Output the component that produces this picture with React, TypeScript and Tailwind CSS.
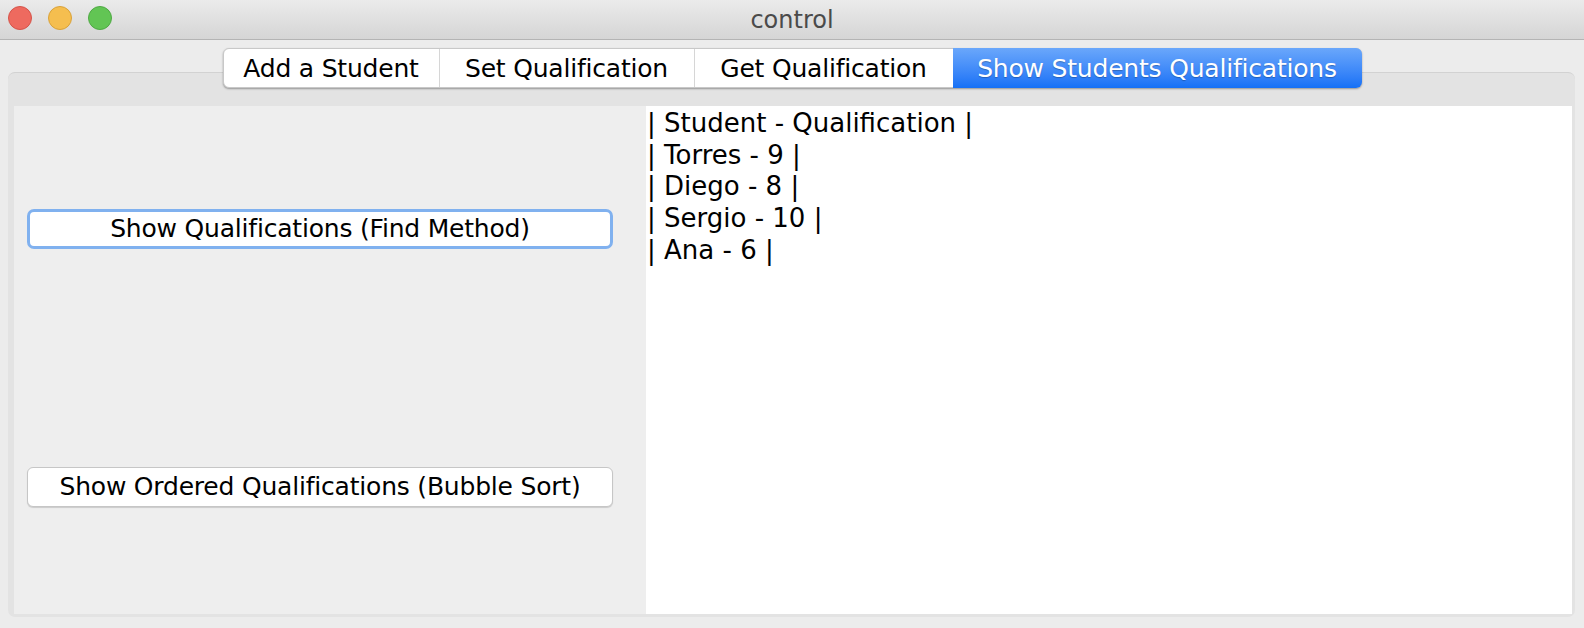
const tabs = [
  { label: "Add a Student", w: "w-[215px]" },
  { label: "Set Qualification", w: "w-[255px]" },
  { label: "Get Qualification", w: "w-[259px]" },
];

const rows = [
  "| Student - Qualification |",
  "| Torres - 9 |",
  "| Diego - 8 |",
  "| Sergio - 10 |",
  "| Ana - 6 |",
];

const font = "font-['DejaVu_Sans','Liberation_Sans',sans-serif]";

export default function App() {
  return (
    <div className={`w-[1584px] h-[628px] bg-[#ececec] overflow-hidden ${font}`}>
      {/* title bar */}
      <div className="relative h-[40px] flex items-center justify-center bg-gradient-to-b from-[#ebebeb] to-[#d5d5d5] border-b border-[#b4b4b4]">
        <div className="absolute left-[8px] top-[6px] flex gap-[16px]">
          <span className="w-[24px] h-[24px] rounded-full bg-[#ee6a5f] border border-[#d5544a]" />
          <span className="w-[24px] h-[24px] rounded-full bg-[#f5be4f] border border-[#d9a23a]" />
          <span className="w-[24px] h-[24px] rounded-full bg-[#62c554] border border-[#4fa944]" />
        </div>
        <span className="text-[24px] text-[#4a4a4a] leading-none">control</span>
      </div>

      {/* tab strip */}
      <div className="pt-[8px] flex justify-center relative z-10">
        <div className="flex h-[40px] rounded-[6px] bg-white shadow-[0_1px_2px_rgba(0,0,0,0.35)] border border-[#c8c8c8]">
          {tabs.map((t, i) => (
            <div
              key={t.label}
              className={`${t.w} flex items-center justify-center pt-[2px] text-[25px] tracking-[-0.2px] text-black ${i > 0 ? "border-l border-[#d6d6d6]" : ""}`}
            >
              {t.label}
            </div>
          ))}
          <div className="w-[409px] -my-px -mr-px flex items-center justify-center pt-[2px] rounded-r-[6px] bg-gradient-to-b from-[#6aa7fb] to-[#1470f6] text-[25px] tracking-[-0.2px] text-white [text-shadow:0_1px_1px_rgba(0,0,0,0.25)]">
            Show Students Qualifications
          </div>
        </div>
      </div>

      {/* tabbed panel */}
      <div className="mx-[8px] -mt-[16px] w-[1567px] h-[545px] rounded-[7px] bg-[#e3e3e3] border-t border-[#d2d2d2] pl-[6px] pr-[3px] pt-[33px] pb-[3px]">
        <div className="flex h-full">
          <div className="w-[632px] bg-[#eeeeee] flex flex-col pl-[13px] pt-[103px]">
            <button className="w-[586px] h-[40px] rounded-[7px] bg-white border-[3px] border-[#80b1ef] text-[25px] tracking-[-0.2px] text-black flex items-center justify-center">
              Show Qualifications (Find Method)
            </button>
            <button className="mt-[218px] w-[586px] h-[40px] rounded-[6px] bg-white border border-[#c6c6c6] shadow-[0_1px_1px_rgba(0,0,0,0.15)] text-[25px] tracking-[-0.2px] text-black flex items-center justify-center">
              Show Ordered Qualifications (Bubble Sort)
            </button>
          </div>
          <div className="flex-1 bg-white pl-[1px] pt-[2px] text-[26px] leading-[31.7px] text-black">
            {rows.map((r) => (
              <div key={r} className="whitespace-pre">{r}</div>
            ))}
          </div>
        </div>
      </div>
    </div>
  );
}
